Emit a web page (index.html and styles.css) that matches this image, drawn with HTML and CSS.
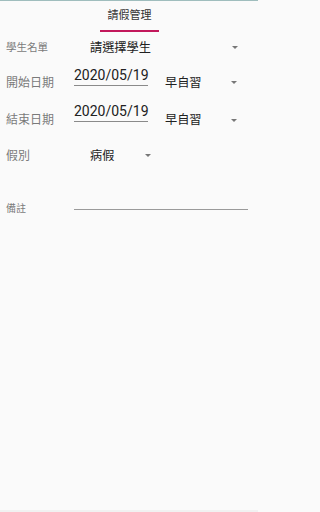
FILE: index.html
```html
<!DOCTYPE html>
<html lang="zh-Hant">
<head>
<meta charset="utf-8">
<title>請假管理</title>
<link rel="stylesheet" href="styles.css">
</head>
<body>
<div class="screen">
  <header class="tabs">
    <div class="tab">請假管理</div>
  </header>
  <div class="row row-student">
    <span class="label label-small">學生名單</span>
    <div class="spinner spinner-wide">
      <span class="value">請選擇學生</span>
      <svg class="arrow" width="6" height="3" viewBox="0 0 6 3"><polygon points="0,0 6,0 3,3" fill="#777"/></svg>
    </div>
  </div>
  <div class="row row-start">
    <span class="label">開始日期</span>
    <div class="date">2020/05/19</div>
    <div class="spinner spinner-period">
      <span class="value">早自習</span>
      <svg class="arrow" width="6" height="3" viewBox="0 0 6 3"><polygon points="0,0 6,0 3,3" fill="#777"/></svg>
    </div>
  </div>
  <div class="row row-end">
    <span class="label">結束日期</span>
    <div class="date">2020/05/19</div>
    <div class="spinner spinner-period">
      <span class="value">早自習</span>
      <svg class="arrow" width="6" height="3" viewBox="0 0 6 3"><polygon points="0,0 6,0 3,3" fill="#777"/></svg>
    </div>
  </div>
  <div class="row row-type">
    <span class="label">假別</span>
    <div class="spinner spinner-type">
      <span class="value">病假</span>
      <svg class="arrow" width="6" height="3" viewBox="0 0 6 3"><polygon points="0,0 6,0 3,3" fill="#777"/></svg>
    </div>
  </div>
  <div class="row row-note">
    <span class="label label-tiny">備註</span>
    <div class="note-field"></div>
  </div>
</div>
</body>
</html>
```
FILE: styles.css
```css
html, body {
  margin: 0;
  padding: 0;
  background: #fafafa;
}
body {
  font-family: "Roboto", "Noto Sans CJK TC", sans-serif;
  color: #212121;
}
.screen {
  box-sizing: border-box;
  width: 258px;
  height: 512px;
  border-top: 1px solid #9fbdbd;
  border-bottom: 2px solid #f1f1f1;
}
.tabs {
  height: 31px;
  display: flex;
  justify-content: center;
}
.tab {
  box-sizing: border-box;
  width: 59px;
  height: 31px;
  margin-left: 1px;
  padding-top: 8px;
  text-align: center;
  font-size: 11px;
  line-height: 14px;
  color: #333;
  border-bottom: 2px solid #c2185b;
}
.row {
  display: flex;
  align-items: center;
  padding-left: 6px;
}
.row-student { height: 31px; }
.row-start { height: 39px; }
.row-end { height: 36px; }
.row-type { height: 35px; }
.row-note { height: 26px; margin-top: 23px; }
.label {
  width: 68px;
  flex: none;
  font-size: 12px;
  line-height: 14px;
  color: #7a7a7a;
}
.label-small { font-size: 10.5px; }
.label-tiny { font-size: 10px; }
.spinner {
  display: flex;
  align-items: center;
}
.value {
  font-size: 12.2px;
  line-height: 14px;
  color: #212121;
}
.arrow {
  display: block;
  flex: none;
}
.spinner-wide {
  flex: 1;
  padding-left: 16px;
  padding-right: 20px;
  justify-content: space-between;
}
.spinner-period {
  flex: 1;
  margin-left: 17px;
  padding-right: 21px;
  justify-content: space-between;
}
.spinner-type {
  padding-left: 16px;
  gap: 31px;
}
.date {
  box-sizing: border-box;
  width: 74px;
  flex: none;
  align-self: flex-start;
  font-size: 14px;
  line-height: 16px;
  padding-bottom: 2px;
  color: #212121;
  border-bottom: 1px solid #8a8a8a;
  white-space: nowrap;
}
.row-start .date { margin-top: 4px; }
.row-end .date { margin-top: 1px; }
.note-field {
  flex: 1;
  margin-right: 10px;
  height: 1px;
  background: #9a9a9a;
}
```
